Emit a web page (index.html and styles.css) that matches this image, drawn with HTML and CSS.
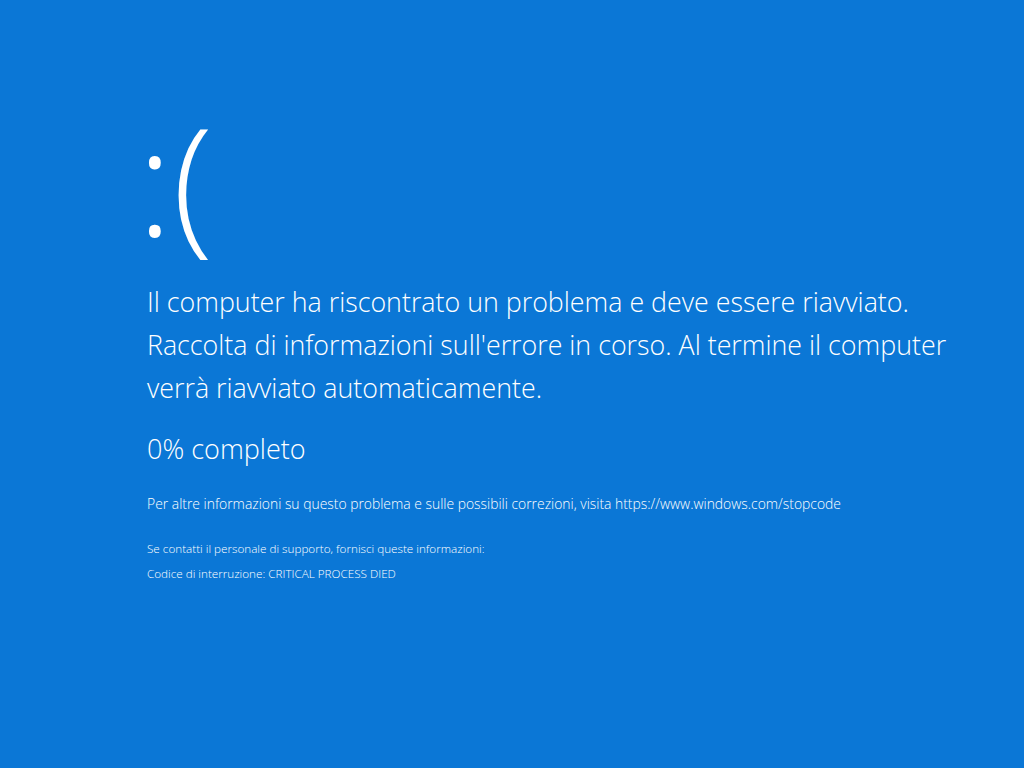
FILE: index.html
```html
<!DOCTYPE html>
<html lang="it">
<head>
<meta charset="utf-8">
<title>Errore</title>
<link rel="stylesheet" href="styles.css">
</head>
<body>
<main class="bsod">
  <div class="face">:(</div>
  <p class="lead">Il computer ha riscontrato un problema e deve essere riavviato.<br>Raccolta di informazioni sull'errore in corso. Al termine il computer<br>verrà riavviato automaticamente.</p>
  <p class="progress">0% completo</p>
  <p class="info">Per altre informazioni su questo problema e sulle possibili correzioni, visita https://www.windows.com/stopcode</p>
  <div class="support">
    <p>Se contatti il personale di supporto, fornisci queste informazioni:</p>
    <p>Codice di interruzione: CRITICAL PROCESS DIED</p>
  </div>
</main>
</body>
</html>
```
FILE: styles.css
```css
html, body {
  margin: 0;
  height: 100%;
  background: #0b77d6;
}
body {
  color: #fff;
  font-family: "Open Sans", "Segoe UI", sans-serif;
  font-weight: 300;
  overflow: hidden;
}
.bsod {
  padding: 78px 0 0 147px;
  display: flex;
  flex-direction: column;
  align-items: flex-start;
}
.face {
  font-size: 149px;
  line-height: 202px;
  margin-left: -10px;
}
p { margin: 0; }
.lead {
  font-size: 26.8px;
  line-height: 43px;
  margin-top: 0;
}
.progress {
  font-size: 27px;
  line-height: 40px;
  margin-top: 20px;
}
.info {
  font-size: 13.9px;
  line-height: 20px;
  margin-top: 25px;
}
.support {
  margin-top: 22px;
  font-size: 11.7px;
  line-height: 25px;
}
```
